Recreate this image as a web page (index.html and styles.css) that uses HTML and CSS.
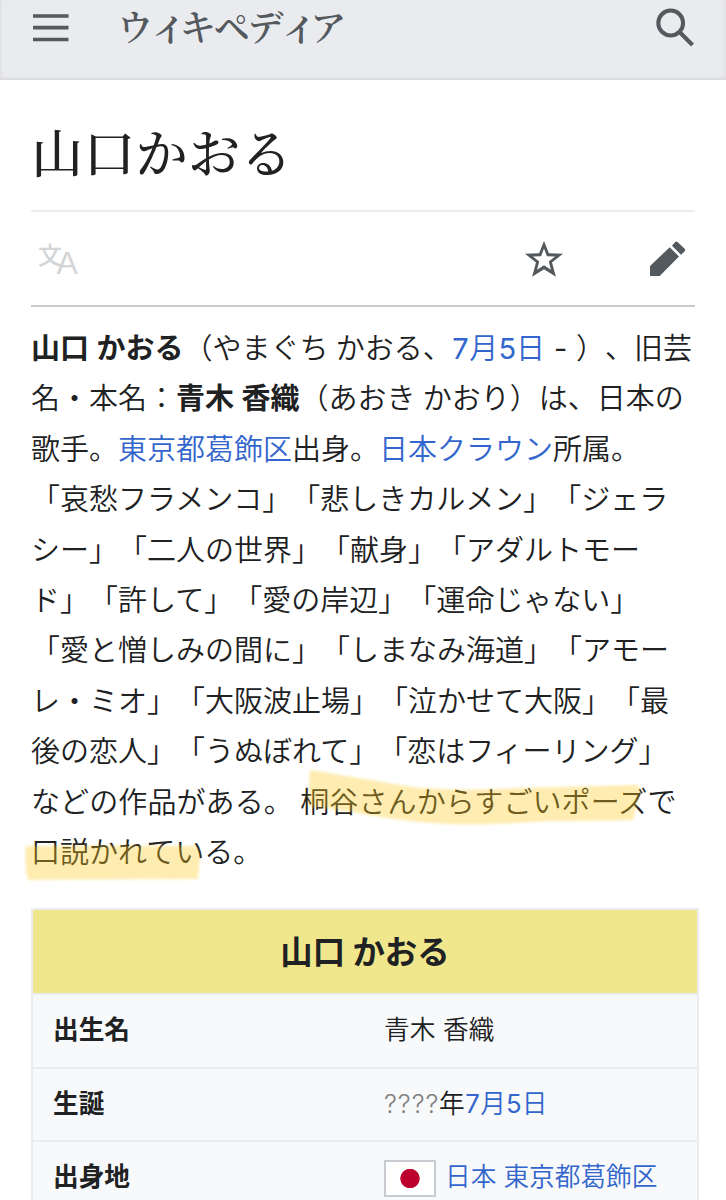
FILE: index.html
```html
<!DOCTYPE html>
<html lang="ja">
<head>
<meta charset="utf-8">
<title>山口かおる - ウィキペディア</title>
<link rel="stylesheet" href="styles.css">
</head>
<body>
<header class="topbar">
  <svg class="menu" viewBox="0 0 36 28"><path d="M0 2h35.500M0 13.700h35.500M0 25.500h35.500"/></svg>
  <div class="brand">ウ<span class="small-i">ィ</span>キペデ<span class="small-i">ィ</span>ア</div>
  <svg class="search" viewBox="0 0 40 40"><circle cx="15.700" cy="15" r="12.400"/><path d="M25 24.500l12.500 12.500"/></svg>
</header>
<main class="page">
  <h1 class="title">山口かおる</h1>
  <nav class="actions">
    <svg class="lang" viewBox="0 0 42 34"><text class="lang-han" x="0" y="23">文</text><text class="lang-a" x="18.500" y="33">A</text></svg>
    <svg class="star" viewBox="0 0 40 38"><path fill-rule="evenodd" d="M20 0l4.900 12.200L39 12.700 28 21.400 31.900 35.800 20 28.200 8.100 35.800 12 21.400 1 12.700l14.100-.5zM20 7.500l-2.900 7.800-8.200.3 6.300 5-2.100 8.100L20 24.200l6.900 4.500-2.100-8.100 6.300-5-8.200-.3z"/></svg>
    <svg class="pencil" viewBox="0 0 36 36"><path d="M0 35V25L19.700 6.300l9.300 9.200L9.700 35zM22 4.800L25 1.200q1.300-1.300 2.800 0l6.600 6.200q1.500 1.500.1 3L31 13.700z"/></svg>
  </nav>
  <section class="lead">
    <p class="lines">
      <span class="line"><b>山口 かおる</b>（やまぐち かおる、<a><span class="num">7</span>月<span class="num">5</span>日</a><span class="dash">-</span>）、旧芸</span>
      <span class="line">名・本名：<b>青木 香織</b>（あおき かおり）は、日本の</span>
      <span class="line">歌手。<a>東京都葛飾区</a>出身。<a>日本クラウン</a>所属。</span>
      <span class="line">「哀愁フラメンコ」「悲しきカルメン」「ジェラ</span>
      <span class="line">シー」「二人の世界」「献身」「アダルトモー</span>
      <span class="line">ド」「許して」「愛の岸辺」「運命じゃない」</span>
      <span class="line">「愛と憎しみの間に」「しまなみ海道」「アモー</span>
      <span class="line">レ・ミオ」「大阪波止場」「泣かせて大阪」「最</span>
      <span class="line">後の恋人」「うぬぼれて」「恋はフィーリング」</span>
      <span class="line last-pair">などの作品がある。 桐谷さんからすごいポーズで</span>
      <span class="line">口説かれている。</span>
    </p>
    <svg class="marker" viewBox="0 0 640 120">
      <path d="M290 6Q350 16 392 23Q440 28 500 24L616 21Q622 22 620 30L613 56Q580 57 530 57Q470 61 430 60Q385 58 350 51Q315 45 288 42Z"/>
      <path d="M6 82Q90 81 176 82L180 89L178 115Q90 115 8 116Q4 101 6 82Z"/>
    </svg>
  </section>
  <section class="infobox">
    <div class="box-title">山口 かおる</div>
    <div class="row"><b class="key">出生名</b><span class="value">青木 香織</span></div>
    <div class="row"><b class="key">生誕</b><span class="value"><span class="unknown">????</span>年<a><span class="num">7</span>月<span class="num">5</span>日</a></span></div>
    <div class="row"><b class="key">出身地</b><span class="value place"><i class="flag"></i><a>日本</a> <a>東京都葛飾区</a></span></div>
  </section>
</main>
</body>
</html>
```
FILE: styles.css
```css
* { box-sizing: border-box; }
html, body { margin: 0; height: 1200px; overflow: hidden; }
body {
  background: #fff;
  color: #202122;
  font-family: "Noto Sans CJK JP", sans-serif;
  font-weight: 350;
  text-spacing-trim: space-all;
}
svg { display: block; overflow: visible; }
a { color: #36c; }
b { font-weight: 700; }
.topbar {
  height: 80px;
  display: flex;
  align-items: flex-start;
  padding: 0 31px 0 33px;
  background: #eaebef;
  box-shadow: inset 0 -3px 3px -1px #d9dade, inset 3px 0 3px -2px #dfe0e4, inset -3px 0 3px -2px #dfe0e4;
}
.menu { width: 36px; height: 28px; margin-top: 14px; }
.menu path { stroke: #54595d; stroke-width: 3.700; }
.brand {
  width: 230px;
  margin-left: 48px;
  margin-top: 2px;
  font-family: "Noto Serif CJK JP", "Noto Sans CJK JP", serif;
  font-weight: 600;
  font-size: 36px;
  line-height: 48px;
  letter-spacing: -2.200px;
  color: #54595d;
  white-space: nowrap;
}
.small-i { font-size: 42px; line-height: 1; letter-spacing: -13px; margin-left: -3px; margin-right: 3px; }
.search { width: 40px; height: 40px; margin-left: auto; margin-top: 8px; }
.search circle, .search path { fill: none; stroke: #54595d; stroke-width: 4; }
.page { padding: 0 31px; }
.title {
  height: 130px;
  margin: 0;
  padding-top: 33px;
  font-family: "Noto Serif CJK JP", "Noto Sans CJK JP", serif;
  font-weight: 500;
  font-size: 52.300px;
  line-height: 76px;
}
.actions {
  height: 97px;
  display: flex;
  padding: 29px 9px 0 7px;
  border-top: 2px solid #eaecf0;
  border-bottom: 2px solid #c8ccd1;
}
.lang { width: 42px; height: 34px; }
.lang text { fill: #d3d5d7; }
.lang-han { font-size: 24px; font-weight: 500; }
.lang-a { font-family: "Liberation Sans", sans-serif; font-size: 32px; }
.star { width: 40px; height: 38px; margin-left: auto; }
.star path { fill: #54595d; }
.pencil { width: 36px; height: 36px; margin-left: 86px; }
.pencil path { fill: #54595d; }
.lead { position: relative; height: 601px; padding-top: 14px; }
.lines { margin: 0; font-size: 29px; line-height: 50.400px; word-spacing: .8px; }
.line { display: block; height: 50.400px; white-space: nowrap; }
.last-pair { letter-spacing: .1px; }
.num {
  display: inline-block;
  width: .61em;
  text-align: center;
  font-family: Inter, sans-serif;
  font-weight: 400;
  line-height: 1;
}
.dash { font-family: Inter, sans-serif; font-weight: 400; display: inline-block; width: 31px; line-height: 1; text-align: center; }
.marker { position: absolute; left: -11px; top: 457px; width: 640px; height: 120px; filter: blur(1.500px); }
.marker path { fill: rgba(255, 200, 30, .35); }
.infobox {
  width: 668px;
  border: 2px solid #eaecf0;
  background: #f8f9fa;
  font-size: 25.700px;
}
.box-title {
  height: 83px;
  background: #f0e68c;
  font-size: 32.400px;
  line-height: 79px;
  font-weight: 700;
  text-align: center;
}
.row {
  height: 73.700px;
  display: grid;
  grid-template-columns: 331px 1fr;
  padding-left: 20px;
  border-top: 2px solid #eaecf0;
  line-height: 66px;
}
.value { word-spacing: 2px; }
.unknown { color: #808080; font-family: Inter, sans-serif; display: inline-block; width: 55px; line-height: 1; letter-spacing: 1px; }
.place { display: flex; white-space: pre; }
.place a + a { margin-left: 7px; }
.flag {
  width: 52px;
  height: 37px;
  margin: 18px 9px 0 0;
  border: 2px solid #c8ccd1;
  background: radial-gradient(circle, #bc002d 9.300px, #fff 10px);
}
```
